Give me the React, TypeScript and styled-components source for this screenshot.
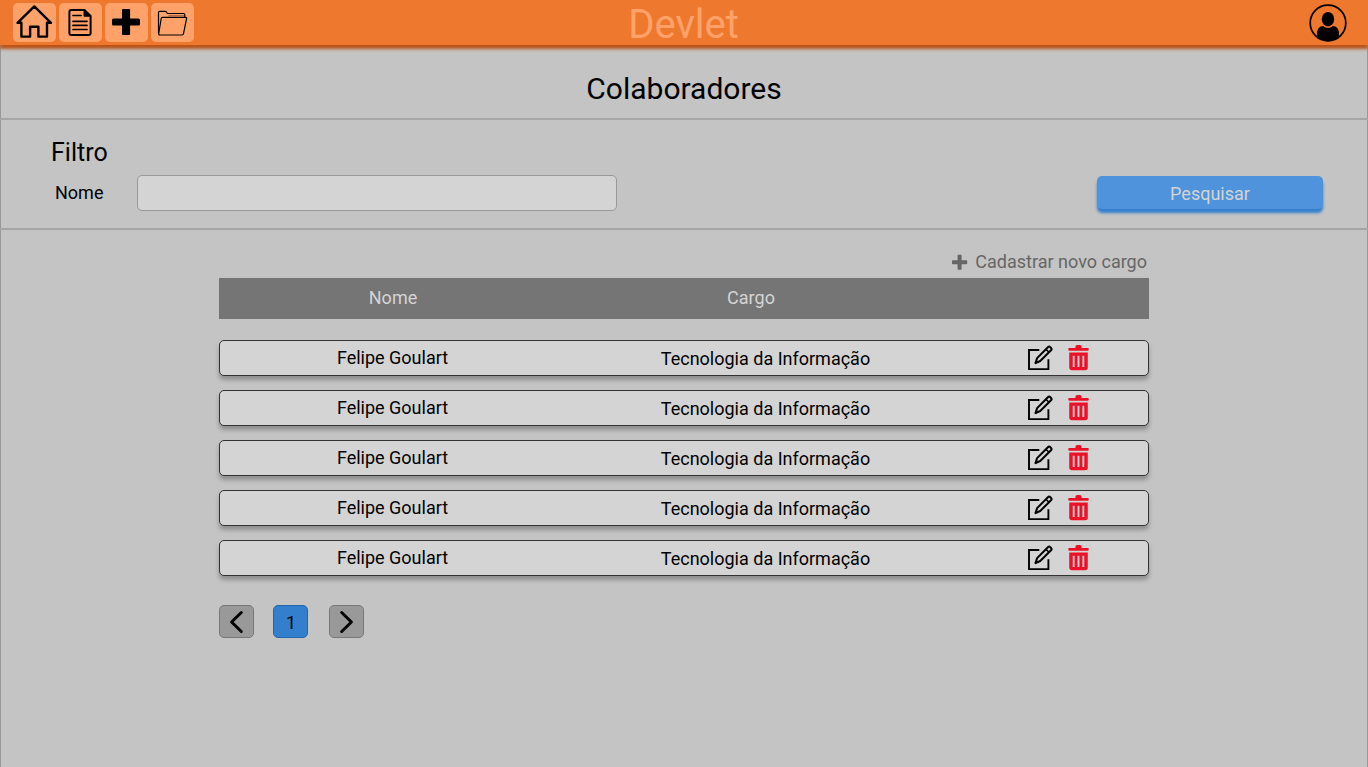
import React from "react";
import styled, { createGlobalStyle } from "styled-components";

const GlobalStyle = createGlobalStyle`
  *, *::before, *::after { box-sizing: border-box; }
  body { margin: 0; font-family: Roboto, sans-serif; font-size: 18px; color: #000; background: #c4c4c4; }
  button, input { font: inherit; color: inherit; padding: 0; margin: 0; }
  svg { display: block; flex: none; }
`;

const Page = styled.div`
  display: flex;
  flex-direction: column;
  height: 767px;
  overflow: hidden;
`;

const Header = styled.header`
  position: relative;
  z-index: 1;
  display: grid;
  grid-template-columns: 1fr auto 1fr;
  height: 45px;
  flex: none;
  padding: 0 21px 0 13px;
  background: #ee782e;
  box-shadow: 0 4px 3px #b9531a;
`;

const Nav = styled.nav`
  display: flex;
  gap: 3px;
  padding-top: 3px;
`;

const NavButton = styled.button`
  width: 43px;
  height: 39px;
  border: 0;
  border-radius: 5px;
  background: #ffa26a;
`;

const Brand = styled.div`
  padding-left: 7px;
  font-size: 40px;
  line-height: 49px;
  color: #ffa26a;
`;

const Avatar = styled.div`
  display: flex;
  justify-content: flex-end;
  padding-top: 4px;
`;

const Main = styled.main`
  flex: 1;
  border: solid #999;
  border-width: 0 1px;
`;

const TitleBar = styled.div`
  height: 75px;
  margin: 0 -1px;
  padding-top: 24px;
  border-bottom: 2px solid #a6a6a6;
`;

const Title = styled.h1`
  margin: 0;
  font-size: 30px;
  font-weight: 400;
  line-height: 40px;
  text-align: center;
`;

const Filter = styled.section`
  height: 110px;
  margin: 0 -1px;
  padding: 18px 45px 0 51px;
  border-bottom: 2px solid #a6a6a6;
`;

const FilterTitle = styled.h2`
  margin: 0;
  font-size: 25px;
  font-weight: 400;
  line-height: 30px;
`;

const FilterRow = styled.div`
  display: flex;
  align-items: flex-start;
  padding: 7px 0 0 4px;
`;

const Label = styled.label`
  width: 82px;
  line-height: 36px;
`;

const Input = styled.input`
  width: 480px;
  height: 36px;
  border: 1px solid #999;
  border-radius: 5px;
  background: #d4d4d4;
`;

const SearchButton = styled.button`
  width: 226px;
  height: 33px;
  margin: 1px 0 0 auto;
  border: 0;
  border-radius: 5px;
  background: #4f93dc;
  color: #d4d4d4;
  line-height: 36px;
  box-shadow: 0 4px 3px #337fcd;
`;

const Content = styled.section`
  width: 930px;
  margin: 0 auto;
  padding-top: 18px;
`;

const AddLink = styled.div`
  display: flex;
  align-items: flex-start;
  justify-content: flex-end;
  gap: 7px;
  height: 30px;
  padding-right: 2px;
  line-height: 28px;
  color: #666;

  svg { margin-top: 6px; }
`;

const TableHead = styled.div`
  display: grid;
  grid-template-columns: 348px 368px 1fr;
  height: 41px;
  margin-bottom: 21px;
  background: #757575;
  color: #d4d4d4;
  line-height: 40px;
  text-align: center;
`;

const Row = styled.div`
  display: grid;
  grid-template-columns: 345px 401px 1fr;
  height: 36px;
  margin-bottom: 14px;
  border: 1px solid #333;
  border-radius: 5px;
  background: #d4d4d4;
  box-shadow: 0 4px 4px rgba(0, 0, 0, 0.27);
  text-align: center;
`;

const Cell = styled.div<{ $line?: number }>`
  line-height: ${(p) => p.$line ?? 34}px;
`;

const Actions = styled.div`
  display: flex;
  gap: 15px;
  padding: 4px 0 0 61px;
`;

const Pager = styled.div`
  display: flex;
  padding-top: 15px;
`;

const PageButton = styled.button<{ $active?: boolean; $gap?: number }>`
  display: flex;
  justify-content: center;
  width: 35px;
  height: 33px;
  margin-right: ${(p) => p.$gap ?? 0}px;
  padding-left: ${(p) => (p.$active ? 1 : 0)}px;
  border: 1px solid ${(p) => (p.$active ? "#2566a8" : "#777")};
  border-radius: 5px;
  background: ${(p) => (p.$active ? "#337fcd" : "#999")};
  line-height: 34px;
`;

const HomeIcon = () => (
  <svg width="43" height="39" viewBox="0 0 43 39" fill="none" stroke="#000" strokeWidth="2.4" strokeLinejoin="round">
    <path d="M21.3 3.4 38 19.8H34V33.6H25.4V23.7H17.1V33.6H8.4V19.8H4.5Z" />
  </svg>
);

const DocumentIcon = () => (
  <svg width="43" height="39" viewBox="0 0 43 39" fill="none" stroke="#000" strokeWidth="2" strokeLinecap="round">
    <path d="M25.5 7H12.4Q10.4 7 10.4 9V30Q10.4 32 12.4 32H29.6Q31.6 32 31.6 30V13Z" strokeLinejoin="round" />
    <path d="M25 6.5V13.2H31.5Z" fill="#000" strokeWidth="1" strokeLinejoin="round" />
    <path d="M14 12.5H22M14 18.3H28M14 22.4H28M14 26.5H28" strokeWidth="1.7" />
  </svg>
);

const BigPlusIcon = () => (
  <svg width="43" height="39" viewBox="0 0 43 39">
    <rect x="7" y="15.5" width="28" height="7" rx="1.5" />
    <rect x="17" y="6" width="8.1" height="26" rx=".8" />
  </svg>
);

const FolderIcon = () => (
  <svg width="43" height="39" viewBox="0 0 43 39" fill="none" stroke="#000" strokeWidth="1.2" strokeLinejoin="round">
    <path d="M7.5 30V9.5Q7.5 8.4 8.6 8.4H14Q15.4 8.4 16 9.7L16.5 10.5H32.5Q33.8 10.5 33.8 11.8V14" />
    <path d="M17.5 12.7H33.5" strokeWidth=".4" />
    <path d="M11.4 14.4H34.6Q35.8 14.4 35.6 15.5L32.5 30.7Q32.2 32 31 32H8.9Q7.5 32 7.7 30.6L10.2 15.5Q10.4 14.4 11.4 14.4Z" />
  </svg>
);

const UserIcon = () => (
  <svg width="38" height="38" viewBox="0 0 38 38">
    <circle cx="19" cy="19" r="17.8" fill="none" stroke="#000" strokeWidth="1.7" />
    <ellipse cx="19" cy="15.2" rx="6.2" ry="7.2" />
    <path d="M8 32Q7.2 22.5 14 22Q19 25.8 24 22Q30.8 22.5 30 32Q25.5 36.9 19 36.9Q12.5 36.9 8 32Z" />
  </svg>
);

const SmallPlusIcon = () => (
  <svg width="16" height="16" viewBox="0 0 16 16" fill="#666">
    <rect x="0" y="6.3" width="15.2" height="4" rx=".8" />
    <rect x="5.6" y=".8" width="4" height="15" rx=".8" />
  </svg>
);

const EditIcon = () => (
  <svg width="26" height="26" viewBox="0 0 26 26" fill="none" stroke="#000" strokeWidth="1.9">
    <path d="M12.3 5H2V24.1H21.4V14.3" />
    <path d="M8.5 18.1 10.1 13.1 20.9 2.2Q22.1 1 23.3 2.2L24.1 3Q25.2 4.1 24 5.3L13.2 16Z" strokeWidth="2" strokeLinejoin="round" />
    <path d="M18.9 4.2 22 7.3M8.2 18.4 10.6 16.1" strokeWidth="1.6" />
  </svg>
);

const TrashIcon = () => (
  <svg width="21" height="26" viewBox="-.2 .3 20.4 25.6" preserveAspectRatio="none">
    <path d="M1 3.3H7V2.2Q7 .4 8.8 .4H11.2Q13 .4 13 2.2V3.3H19Q20 3.3 20 4.6T19 5.9H1Q0 5.9 0 4.6T1 3.3Z" fill="#ed1029" />
    <path d="M1 7.8H19V22.5Q19 25.2 16.3 25.2H3.7Q1 25.2 1 22.5Z" fill="#ed1029" />
    <path d="M5.3 11V22M10 11V22M14.7 11V22" stroke="#d4d4d4" strokeWidth="1.8" />
  </svg>
);

const Chevron = ({ right = false }: { right?: boolean }) => (
  <svg width="33" height="31" viewBox="0 0 33 31" fill="none" stroke="#000" strokeWidth="3" strokeLinecap="round" strokeLinejoin="round">
    <path d={right ? "M11.7 6.5 21.4 16 11.7 25.5" : "M21.3 6.5 11.6 16 21.3 25.5"} />
  </svg>
);

const people = Array.from({ length: 5 }, (_, id) => ({
  id,
  name: "Felipe Goulart",
  role: "Tecnologia da Informação",
}));

export default function App() {
  return (
    <Page>
      <GlobalStyle />
      <Header>
        <Nav>
          <NavButton><HomeIcon /></NavButton>
          <NavButton><DocumentIcon /></NavButton>
          <NavButton><BigPlusIcon /></NavButton>
          <NavButton><FolderIcon /></NavButton>
        </Nav>
        <Brand>Devlet</Brand>
        <Avatar><UserIcon /></Avatar>
      </Header>
      <Main>
        <TitleBar><Title>Colaboradores</Title></TitleBar>
        <Filter>
          <FilterTitle>Filtro</FilterTitle>
          <FilterRow>
            <Label htmlFor="nome">Nome</Label>
            <Input id="nome" />
            <SearchButton>Pesquisar</SearchButton>
          </FilterRow>
        </Filter>
        <Content>
          <AddLink><SmallPlusIcon />Cadastrar novo cargo</AddLink>
          <TableHead>
            <span>Nome</span>
            <span>Cargo</span>
          </TableHead>
          {people.map((p) => (
            <Row key={p.id}>
              <Cell>{p.name}</Cell>
              <Cell $line={36}>{p.role}</Cell>
              <Actions><EditIcon /><TrashIcon /></Actions>
            </Row>
          ))}
          <Pager>
            <PageButton $gap={19}><Chevron /></PageButton>
            <PageButton $active $gap={21}>1</PageButton>
            <PageButton><Chevron right /></PageButton>
          </Pager>
        </Content>
      </Main>
    </Page>
  );
}
